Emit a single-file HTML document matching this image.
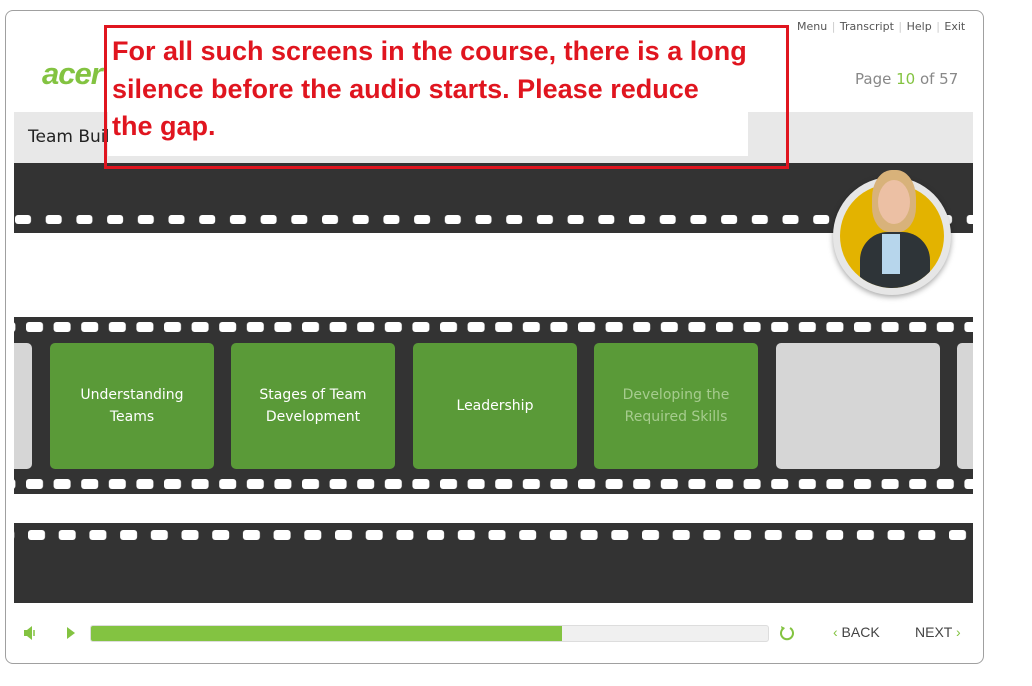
<!DOCTYPE html>
<html><head><meta charset="utf-8"><style>
*{margin:0;padding:0;box-sizing:border-box}
body{width:1032px;height:686px;background:#fff;position:relative;overflow:hidden;font-family:"DejaVu Sans","Liberation Sans",sans-serif}
.abs{position:absolute}
.frame{position:absolute;top:343px;height:126px;border-radius:5px;background:#5a9a38;color:#fff;font-size:14px;line-height:22px;display:flex;align-items:center;justify-content:center;text-align:center}
.grey{background:#d6d6d6}
</style></head><body>
<div class="abs" style="left:5px;top:10px;width:979px;height:654px;border:1px solid #a0a0a0;border-radius:8px"></div>
<div class="abs" style="left:797px;top:20px;font-size:11px;color:#555;word-spacing:1px">Menu <span style="color:#ccc">|</span> Transcript <span style="color:#ccc">|</span> Help <span style="color:#ccc">|</span> Exit</div>
<div class="abs" style="left:42px;top:56px;font-size:31px;font-style:italic;font-weight:bold;color:#83c341;font-family:'Liberation Sans',sans-serif;letter-spacing:-1px">acer</div>
<div class="abs" style="left:855px;top:70px;font-size:15px;color:#888">Page <span style="color:#83c341">10</span> of 57</div>
<div class="abs" style="left:14px;top:112px;width:959px;height:51px;background:#e8e8e8"></div>
<div class="abs" style="left:28px;top:127px;font-size:17px;color:#222">Team Building</div>
<svg class="abs" style="left:14px;top:163px" width="959" height="70"><rect width="959" height="70" fill="#333"/><defs><pattern id="p1" x="0" y="0" width="30.7" height="70" patternUnits="userSpaceOnUse"><rect x="0" y="52" width="16" height="9" rx="3" fill="#fff"/></pattern></defs><rect x="-15" width="980" height="70" fill="url(#p1)" transform="translate(1,0)"/></svg>
<svg class="abs" style="left:14px;top:317px" width="959" height="177"><rect width="959" height="177" fill="#333"/><defs><pattern id="p2" x="12" y="0" width="27.6" height="177" patternUnits="userSpaceOnUse"><rect x="0" y="5" width="17" height="10" rx="3" fill="#fff"/><rect x="0" y="162" width="17" height="10" rx="3" fill="#fff"/></pattern></defs><rect x="-10" width="980" height="177" fill="url(#p2)"/></svg>
<div class="frame grey" style="left:14px;width:18px;border-radius:0 5px 5px 0"></div>
<div class="frame" style="left:50px;width:164px">Understanding<br>Teams</div>
<div class="frame" style="left:231px;width:164px">Stages of Team<br>Development</div>
<div class="frame" style="left:413px;width:164px">Leadership</div>
<div class="frame" style="left:594px;width:164px;color:#a6cc8e">Developing the<br>Required Skills</div>
<div class="frame grey" style="left:776px;width:164px"></div>
<div class="frame grey" style="left:957px;width:16px;border-radius:5px 0 0 5px"></div>
<svg class="abs" style="left:14px;top:523px" width="959" height="80"><rect width="959" height="80" fill="#333"/><defs><pattern id="p3" x="14" y="0" width="30.7" height="80" patternUnits="userSpaceOnUse"><rect x="0" y="7" width="17" height="10" rx="3" fill="#fff"/></pattern></defs><rect x="-10" width="980" height="80" fill="url(#p3)"/></svg>
<div class="abs" style="left:833px;top:177px;width:118px;height:118px;border-radius:50%;background:#e6e6e6;box-shadow:0 2px 6px rgba(0,0,0,.35)"></div>
<div class="abs" style="left:840px;top:184px;width:104px;height:104px;border-radius:50%;background:#e3b300;overflow:hidden">
<div class="abs" style="left:20px;top:48px;width:70px;height:70px;border-radius:40% 40% 0 0;background:#2e3438"></div>
<div class="abs" style="left:42px;top:50px;width:18px;height:40px;background:#b7d6ec"></div>
</div>
<div class="abs" style="left:872px;top:170px;width:44px;height:62px;border-radius:45% 45% 40% 40%;background:#d8b27a"></div>
<div class="abs" style="left:878px;top:180px;width:32px;height:44px;border-radius:50%;background:#ecc0a4"></div>
<svg class="abs" style="left:22px;top:626px" width="16" height="14"><path d="M2 4h3l5-4v14l-5-4H2z" fill="#83c341"/><path d="M12 4v6" stroke="#83c341" stroke-width="1.5"/></svg>
<svg class="abs" style="left:66px;top:627px" width="10" height="12"><path d="M1 0l8 6-8 6z" fill="#83c341"/></svg>
<div class="abs" style="left:90px;top:625px;width:679px;height:17px;border:1px solid #ddd;border-radius:3px;background:#f0f0f0;overflow:hidden"><div style="width:471px;height:100%;background:#83c341"></div></div>
<svg class="abs" style="left:778px;top:624px" width="18" height="18"><path d="M6 4A6 6 0 1 0 12 4" fill="none" stroke="#83c341" stroke-width="2"/><path d="M3 2l4 2-3 3z" fill="#83c341"/></svg>
<div class="abs" style="left:833px;top:624px;font-size:14px;color:#444;font-family:'Liberation Sans',sans-serif"><span style="color:#83c341">‹</span> BACK</div>
<div class="abs" style="left:915px;top:624px;font-size:14px;color:#444;font-family:'Liberation Sans',sans-serif">NEXT <span style="color:#83c341">›</span></div>
<div class="abs" style="left:108px;top:28px;width:640px;height:128px;background:#fff"></div>
<div class="abs" style="left:104px;top:25px;width:685px;height:144px;border:3px solid #e0151f"></div>
<div class="abs" style="left:112px;top:33px;width:675px;font-size:27px;line-height:37.5px;font-weight:bold;color:#e0151f;font-family:'Liberation Sans',sans-serif;white-space:nowrap">For all such screens in the course, there is a long<br>silence before the audio starts. Please reduce<br>the gap.</div>
</body></html>
